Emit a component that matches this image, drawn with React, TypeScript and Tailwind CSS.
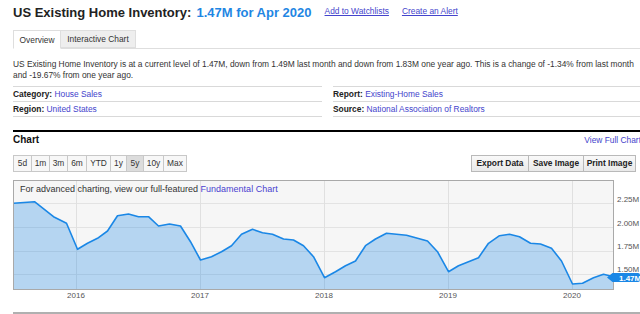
import type { ReactNode } from 'react';

const points: [number, number][] = [
  [0, 23.3], [21, 21.7], [40, 36.7], [53, 43.3], [64, 69.3], [74, 63.3], [84, 58.3], [94, 51],
  [104, 35.7], [115, 34], [125, 36.7], [135, 36.7], [145, 46], [156, 44], [167, 46], [177, 61.7],
  [187, 80], [198, 76.7], [208, 71.7], [218, 65.7], [228, 54.3], [239, 49.3], [249, 52.7], [259, 54.3],
  [270, 59], [280, 60], [290, 65.7], [300, 76.7], [311, 97.7], [322, 91.7], [332, 85.7], [342, 81],
  [352, 65.7], [362, 59], [373, 53.3], [383, 54.3], [393, 55.3], [404, 58.3], [414, 61], [424, 71.7],
  [435, 91.7], [445, 85.7], [455, 81.7], [465, 77.7], [475, 63.3], [486, 55.7], [496, 54.3], [506, 56.7],
  [517, 63.3], [527, 64], [538, 68.3], [548, 81], [559, 104], [569, 103.3], [580, 97.7], [590, 94.3],
  [600, 96.7],
];

const years = [
  { label: '2016', x: 63 },
  { label: '2017', x: 187 },
  { label: '2018', x: 311 },
  { label: '2019', x: 435 },
  { label: '2020', x: 559 },
];

const levels = [
  { label: '2.25M', grid: 23, text: 22 },
  { label: '2.00M', grid: 47, text: 45.7 },
  { label: '1.75M', grid: 71, text: 69 },
  { label: '1.50M', grid: 94, text: 92.3 },
];

const ranges = [
  { label: '5d', w: 'w-[18px]' },
  { label: '1m', w: 'w-[18px]' },
  { label: '3m', w: 'w-[18px]' },
  { label: '6m', w: 'w-[19px]' },
  { label: 'YTD', w: 'w-[24px]' },
  { label: '1y', w: 'w-[16px]' },
  { label: '5y', w: 'w-[17px]', active: true },
  { label: '10y', w: 'w-[20px]' },
  { label: 'Max', w: 'w-[24px] border-r' },
];

function InfoRow({ label, value }: { label: string; value: string }) {
  return (
    <div className="h-[15px] border-b border-[#d9d9d9] leading-[14px]">
      <span className="font-bold text-[#222]">{label}:</span>{' '}
      <a className="text-[#4444cc]">{value}</a>
    </div>
  );
}

function ToolButton({ children, className }: { children: ReactNode; className: string }) {
  return (
    <button
      className={`h-[17px] border-y border-l border-[#b9b9b9] bg-gradient-to-b from-[#f9f9f9] to-[#e9e9e9] text-center font-bold leading-[15px] text-[#222] ${className}`}
    >
      {children}
    </button>
  );
}

function InventoryChart() {
  const line = points.map(([x, y], i) => `${i ? 'L' : 'M'}${x + 0.5} ${y}`).join(' ');
  const area = `${line} L600.5 109 L0.5 109 Z`;

  return (
    <div className="relative mt-[8px] h-[125px]">
      <svg width="627" height="125" className="block">
        <rect x="0.5" y="0.5" width="600" height="109" fill="#f6f6f6" />
        {levels.map((l) => (
          <line key={l.label} x1="1" x2="600" y1={l.grid + 0.5} y2={l.grid + 0.5} stroke="#e3e3e3" />
        ))}
        {years.map((y) => (
          <line key={y.label} x1={y.x + 0.5} x2={y.x + 0.5} y1="1" y2="109" stroke="#e0e0e0" />
        ))}
        <path d={area} fill="#1e88e5" fillOpacity="0.3" />
        <path d={line} fill="none" stroke="#1a87e6" strokeWidth="1.6" strokeLinejoin="round" />
        <rect x="0.5" y="0.5" width="600" height="109" fill="none" stroke="#a9a9a9" />
        {years.map((y) => (
          <text key={y.label} x={y.x} y="118" textAnchor="middle" fontSize="8" fill="#555">
            {y.label}
          </text>
        ))}
        {levels.map((l) => (
          <text key={l.label} x="604" y={l.text} fontSize="8" fill="#555">
            {l.label}
          </text>
        ))}
        <path d="M594 97.5 L599.5 93 H625 a2 2 0 0 1 2 2 V100 a2 2 0 0 1 -2 2 H599.5 Z" fill="#1a87e6" />
        <text x="606" y="100.6" fontSize="8" fontWeight="bold" fill="#fff">
          1.47M
        </text>
      </svg>
      <p className="absolute left-[7px] top-[4px] text-[9px] leading-[10px] text-[#333]">
        For advanced charting, view our full-featured <a className="text-[#4a3fd0]">Fundamental Chart</a>
      </p>
    </div>
  );
}

export default function App() {
  return (
    <div className="h-[314px] w-[640px] overflow-hidden bg-white font-['Liberation_Sans',Arial,sans-serif] text-[8.4px] text-[#333]">
      <div className="ml-[13px] w-[628px]">
        <div className="flex items-start pt-[5px]">
          <h1 className="text-[13px] font-bold leading-[15px] text-[#222]">
            US Existing Home Inventory:<span className="ml-[5px] text-[#1f86e3]">1.47M for Apr 2020</span>
          </h1>
          <div className="ml-[13px] mt-[1px] flex gap-[13px] leading-[10px]">
            <a className="text-[#4444cc] underline">Add to Watchlists</a>
            <a className="text-[#4444cc] underline">Create an Alert</a>
          </div>
        </div>

        <div className="mt-[10px] flex border-b border-[#dedede]">
          <div className="-mb-px h-[19px] w-[48px] border border-b-white border-[#dedede] bg-white text-center leading-[18px]">
            Overview
          </div>
          <div className="h-[18px] w-[75px] border-y border-r border-[#dedede] bg-[#eeeeee] text-center leading-[17px]">
            Interactive Chart
          </div>
        </div>

        <p className="mt-[10px] leading-[10.5px]">
          US Existing Home Inventory is at a current level of 1.47M, down from 1.49M last month and down from 1.83M one
          year ago. This is a change of -1.34% from last month and -19.67% from one year ago.
        </p>

        <div className="mt-[6px] grid grid-cols-[309px_1fr] gap-x-[11px]">
          <div className="border-t border-[#d9d9d9]">
            <InfoRow label="Category" value="House Sales" />
            <InfoRow label="Region" value="United States" />
          </div>
          <div className="border-t border-[#d9d9d9]">
            <InfoRow label="Report" value="Existing-Home Sales" />
            <InfoRow label="Source" value="National Association of Realtors" />
          </div>
        </div>

        <div className="mt-[13px] flex items-baseline justify-between border-t-2 border-black pt-[1px]">
          <h2 className="text-[10px] font-bold leading-[14px] text-[#111]">Chart</h2>
          <a className="whitespace-nowrap text-[#4444cc]">View Full Chart</a>
        </div>

        <div className="mt-[8px] flex justify-between">
          <div className="flex">
            {ranges.map((r) => (
              <button
                key={r.label}
                className={`h-[17px] border-y border-l border-[#c8c8c8] text-center leading-[15px] text-[#333] ${r.w} ${
                  r.active ? 'bg-[#dcdcdc]' : 'bg-[#f7f7f7]'
                }`}
              >
                {r.label}
              </button>
            ))}
          </div>
          <div className="mr-[5px] flex">
            <ToolButton className="w-[57px]">Export Data</ToolButton>
            <ToolButton className="w-[55px]">Save Image</ToolButton>
            <ToolButton className="w-[53px] border-r">Print Image</ToolButton>
          </div>
        </div>

        <InventoryChart />

        <div className="mt-[7px] h-[2px] bg-[#b0b0b0]" />
      </div>
    </div>
  );
}
